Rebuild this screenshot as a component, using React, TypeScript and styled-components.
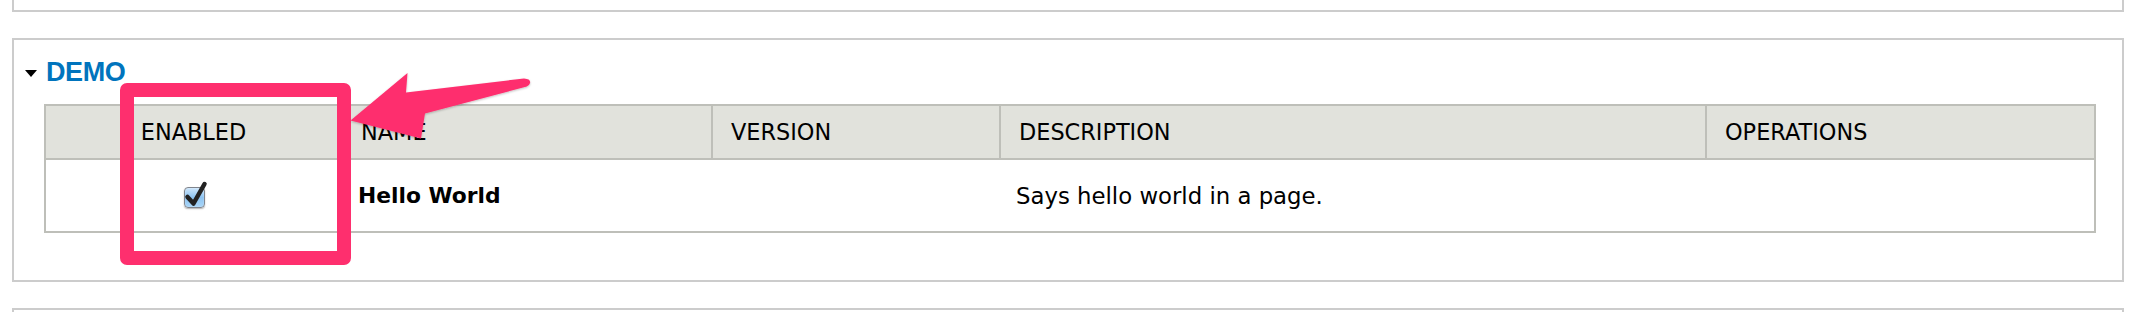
import React from "react";
import styled, { createGlobalStyle } from "styled-components";

const GlobalStyle = createGlobalStyle`
  html, body {
    margin: 0;
    padding: 0;
    background: #fff;
  }
  body {
    font-family: "DejaVu Sans", Verdana, sans-serif;
    color: #000;
  }
`;

const Page = styled.div`
  position: relative;
  width: 2152px;
  height: 312px;
  overflow: hidden;
  padding: 0 28px 0 12px;
  box-sizing: border-box;
`;

const Fieldset = styled.section<{ $stub?: "top" | "bottom" }>`
  border: 2px solid #ccc;
  box-sizing: border-box;
  ${(p) => p.$stub === "top" && "border-top: none; height: 12px;"}
  ${(p) => p.$stub === "bottom" && "margin-top: 26px; height: 40px; border-bottom: none;"}
`;

const DemoFieldset = styled(Fieldset)`
  margin-top: 26px;
  padding: 0 26px 47px 30px;
`;

const Legend = styled.div`
  height: 64px;
  display: flex;
  align-items: center;
  margin-left: -19px;
`;

const Caret = styled.span`
  width: 0;
  height: 0;
  margin-top: 3px;
  margin-right: 9px;
  border-left: 6px solid transparent;
  border-right: 6px solid transparent;
  border-top: 7px solid #000;
`;

const LegendLink = styled.a`
  font-family: "Liberation Sans", Arial, sans-serif;
  font-weight: bold;
  font-size: 27px;
  line-height: 27px;
  letter-spacing: -0.4px;
  color: #0074bd;
  text-decoration: none;
  text-transform: uppercase;
`;

const Table = styled.div`
  border: 2px solid #bebfb9;
`;

const cols = "295px 370px 288px 706px 389px";

const HeadRow = styled.div`
  display: grid;
  grid-template-columns: ${cols};
  height: 54px;
  background: #e1e2dc;
  border-bottom: 2px solid #bebfb9;
  box-sizing: border-box;
`;

const Th = styled.div<{ $center?: boolean }>`
  display: flex;
  align-items: center;
  justify-content: ${(p) => (p.$center ? "center" : "flex-start")};
  padding-left: ${(p) => (p.$center ? "0" : "18px")};
  border-left: ${(p) => (p.$center ? "none" : "2px solid #bebfb9")};
  font-size: 22.4px;
  text-transform: uppercase;
`;

const BodyRow = styled.div`
  display: grid;
  grid-template-columns: ${cols};
  height: 71px;
`;

const Td = styled.div<{ $center?: boolean; $bold?: boolean }>`
  display: flex;
  align-items: center;
  justify-content: ${(p) => (p.$center ? "center" : "flex-start")};
  padding-left: ${(p) => (p.$center ? "0" : "17px")};
  font-size: ${(p) => (p.$bold ? "21.8px" : "22.8px")};
  font-weight: ${(p) => (p.$bold ? "bold" : "normal")};
`;

const CheckBox = styled.span`
  position: relative;
  width: 21px;
  height: 21px;
  margin-top: 3px;
  margin-left: 1px;
  box-sizing: border-box;
  border: 1.5px solid #80848c;
  border-radius: 4px;
  background: linear-gradient(#cfe7fc, #8cc3f1 50%, #a9d5f7);
  box-shadow: 0 1px 1.5px rgba(0, 0, 0, 0.3), inset 0 0 1px #fff;
  svg {
    position: absolute;
    left: -1px;
    top: -8px;
    overflow: visible;
  }
`;

const Overlay = styled.svg`
  position: absolute;
  left: 0;
  top: 0;
  pointer-events: none;
`;

const headers = [
  { label: "Enabled", center: true },
  { label: "Name" },
  { label: "Version" },
  { label: "Description" },
  { label: "Operations" },
];

export default function App() {
  return (
    <>
      <GlobalStyle />
      <Page>
        <Fieldset $stub="top" />
        <DemoFieldset>
          <Legend>
            <Caret />
            <LegendLink href="#">Demo</LegendLink>
          </Legend>
          <Table>
            <HeadRow>
              {headers.map((h) => (
                <Th key={h.label} $center={h.center}>
                  {h.label}
                </Th>
              ))}
            </HeadRow>
            <BodyRow>
              <Td $center>
                <CheckBox>
                  <svg width="22" height="26" viewBox="0 0 22 26">
                    <polyline
                      points="3.5,17 9.5,23.5 20.5,4"
                      fill="none"
                      stroke="#222"
                      strokeWidth="4.5"
                      strokeLinecap="round"
                      strokeLinejoin="round"
                    />
                  </svg>
                </CheckBox>
              </Td>
              <Td $bold>Hello World</Td>
              <Td />
              <Td>Says hello world in a page.</Td>
              <Td />
            </BodyRow>
          </Table>
        </DemoFieldset>
        <Fieldset $stub="bottom" />
        <Overlay width="2152" height="312" viewBox="0 0 2152 312">
          <defs>
            <filter id="shadow" x="-10%" y="-10%" width="120%" height="130%">
              <feDropShadow dx="0" dy="1" stdDeviation="1" floodColor="#000" floodOpacity="0.25" />
            </filter>
          </defs>
          <rect
            x="127"
            y="90"
            width="217"
            height="168"
            fill="none"
            stroke="#fe2f6e"
            strokeWidth="14"
            strokeLinejoin="round"
          />
          <path
            d="M350.5 120.5 L407.5 73 L406 92.5 L524 78.5 Q531 79 530 83 Q529 86 525 87 L425 113.5 L421 138.5 Z"
            fill="#fe2f6e"
            filter="url(#shadow)"
          />
        </Overlay>
      </Page>
    </>
  );
}
